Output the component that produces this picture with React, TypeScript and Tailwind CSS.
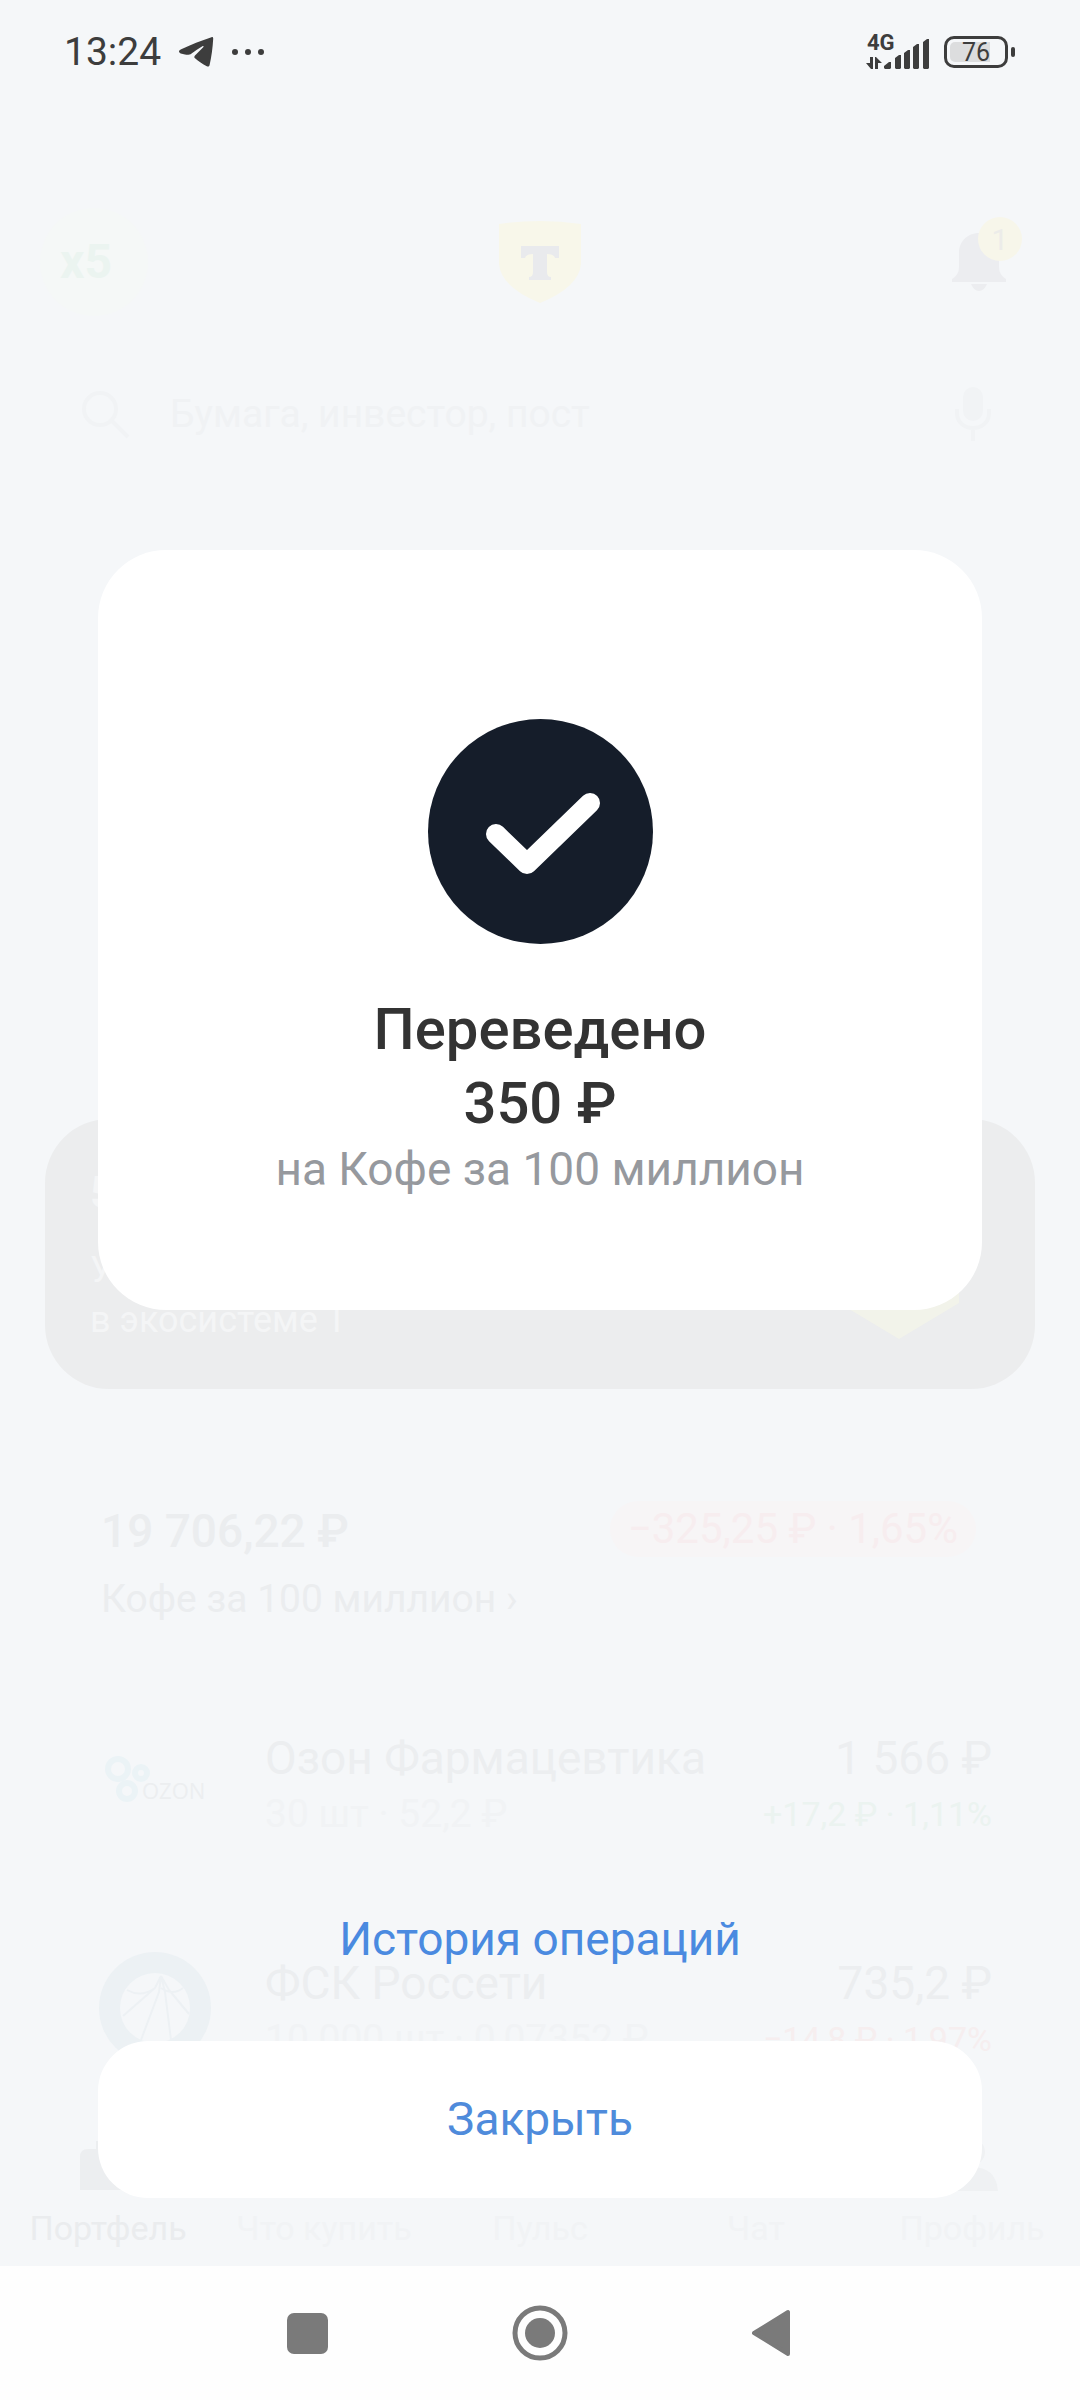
import type { ReactNode } from "react";

type Holding = {
	name: string;
	lot: string;
	value: string;
	change: string;
	up: boolean;
	logo: ReactNode;
};

const holdings: Holding[] = [
	{
		name: "Озон Фармацевтика",
		lot: "30 шт · 52,2 ₽",
		value: "1 566 ₽",
		change: "+17,2 ₽ · 1,11%",
		up: true,
		logo: <OzonLogo />
	},
	{
		name: "ФСК Россети",
		lot: "10 000 шт · 0,07352 ₽",
		value: "735,2 ₽",
		change: "−14,8 ₽ · 1,97%",
		up: false,
		logo: <RossetiLogo />
	}
];

function OzonLogo() {
	return (
		<svg viewBox="0 0 112 112" className="size-28 shrink-0" aria-label="Ozon">
			<g fill="none" stroke="#ebf3f6" strokeWidth="6">
				<circle cx="19" cy="42" r="10" />
				<circle cx="42" cy="46" r="6" />
				<circle cx="28" cy="64" r="8" />
			</g>
			<text
				x="43"
				y="72"
				fontSize="22"
				fontFamily="Open Sans, sans-serif"
				fill="#eceef0"
			>
				OZON
			</text>
		</svg>
	);
}

function RossetiLogo() {
	return (
		<svg viewBox="0 0 112 112" className="size-28 shrink-0" aria-label="Россети">
			<circle cx="56" cy="56" r="56" fill="#ecf1f4" />
			<circle cx="56" cy="56" r="35" fill="#f5f7f9" />
			<path
				d="M62 24 56 36 24 64M62 24 60 40 42 88M62 24 66 40 72 88M62 24 70 38 90 62M28 38q14 8 28-2M62 36q12 8 22 0"
				fill="none"
				stroke="#edf1f4"
				strokeWidth="2"
			/>
		</svg>
	);
}

function TelegramIcon() {
	return (
		<svg viewBox="0 0 35 32" width="35" height="32" fill="#3d3d3d">
			<path d="M0 15.6C0 14.4 1 13.8 2.200 13.200 12 8.600 22 4.600 32.500 1.200c1.200-.3 1.800.3 1.700 1.500-.5 9-1.700 18-3.600 26.300-.4 1.400-1.400 2-2.800 1.300C23.400 28.100 19.600 25.400 16 22.300c-.9-.9-.9-1.900 0-2.900L24.200 11.200c.7-.9.3-1.500-.8-1-3.800 2.200-7.400 4.800-10.800 7.200-2 1.500-4.300 1.700-6.600 1.100L1.700 17.400C.7 17 0 16.500 0 15.600z" />
		</svg>
	);
}

function StatusBar() {
	return (
		<div className="flex h-[104px] items-center justify-between pl-16 pr-[65px] text-[#3d3d3d]">
			<div className="flex items-center">
				<span className="w-[115px] text-[39px] leading-none">13:24</span>
				<TelegramIcon />
				<div className="ml-[18px] flex gap-[7px]">
					<span className="size-1.5 rounded-full bg-[#3d3d3d]" />
					<span className="size-1.5 rounded-full bg-[#3d3d3d]" />
					<span className="size-1.5 rounded-full bg-[#3d3d3d]" />
				</div>
			</div>
			<div className="flex items-center">
				<svg viewBox="0 -6 66 48" width="66" height="48" fill="#3d3d3d">
					<text
						x="1"
						y="16"
						fontSize="22"
						fontWeight="700"
						fontFamily="Roboto, sans-serif"
					>
						4G
					</text>
					<path d="M4 23h3v12H5L0 29h4zM9 35V23h1l6 6h-4v6z" />
					<path d="M18 34v-2l5-4h2v6l-1 1h-5zM29 34V24l4-3h2v13l-1 1h-4zM38 34V19l4-3h2v18l-1 1h-4zM47 34V13l4-3h2v24l-1 1h-4zM57 34V8l4-3h2v29l-1 1h-4z" />
				</svg>
				<div className="ml-3 flex h-8 w-16 rounded-[10px] border-[3px] border-[#3d3d3d] p-[3px]">
					<div className="flex w-10 items-center justify-end rounded-l-[5px] bg-[#dcddde]">
						<span className="text-[25px] leading-none">76</span>
					</div>
				</div>
				<div className="ml-[3px] h-2.5 w-1 rounded-full bg-[#3d3d3d]" />
			</div>
		</div>
	);
}

function AppHeader() {
	return (
		<header className="mt-[104px] grid h-[108px] grid-cols-3 items-center px-10">
			<div className="flex size-[108px] items-center rounded-full bg-[#f5f8f7] pl-5 text-[48px] font-bold text-[#ebf4f0]">
				x5
			</div>
			<svg
				viewBox="0 0 82 82"
				className="size-[82px] justify-self-center"
				aria-label="Т-Инвестиции"
			>
				<path
					d="M0 3Q41-3 82 3v40Q80 66 41 82 2 66 0 43z"
					fill="#f8f7ea"
				/>
				<path
					d="M22 25h38v12h-4q-1-4-8-4v18q0 5 4 5v3H30v-3q4 0 4-5V33q-7 0-8 4h-4z"
					fill="#e9eaed"
				/>
			</svg>
			<button
				type="button"
				className="relative mr-[30px] justify-self-end"
				aria-label="Уведомления, 1"
			>
				<svg viewBox="0 0 54 58" width="54" height="58" className="mr-1" fill="#ecedf0">
					<path d="M27 0c12 0 20 9 20 20v14q0 8 7 12v3H0v-3q7-4 7-12V20C7 9 15 0 27 0zM19 51h16q-3 7-8 7t-8-7z" />
				</svg>
				<span className="absolute -right-3 -top-4 flex size-11 items-center justify-center rounded-full bg-[#f7f6ea] text-[30px] text-[#ecece9]">
					1
				</span>
			</button>
		</header>
	);
}

function SearchRow() {
	return (
		<div className="mt-[58px] flex h-20 items-center pl-20 pr-[88px]">
			<svg viewBox="0 0 50 50" width="50" height="50" fill="none" stroke="#f1f3f5" strokeWidth="4">
				<circle cx="20" cy="20" r="16" />
				<path d="m32 32 16 16" />
			</svg>
			<input
				type="search"
				aria-label="Поиск"
				placeholder="Бумага, инвестор, пост"
				className="ml-10 min-w-0 flex-1 bg-transparent text-[39px] placeholder:text-[#f0f2f4]"
			/>
			<button type="button" aria-label="Голосовой поиск">
				<svg viewBox="0 0 38 54" width="38" height="54" fill="none" stroke="#f1f3f5" strokeWidth="4">
					<rect x="11" y="2" width="16" height="30" rx="8" fill="#f1f3f5" />
					<path d="M3 22v4c0 20 32 20 32 0v-4M19 42v12" />
				</svg>
			</button>
		</div>
	);
}

function Banner() {
	return (
		<section className="mx-[45px] mt-[665px] flex h-[270px] justify-between rounded-[64px] bg-[#ecedee] pl-[45px] pr-[76px] text-[#f4f5f6]">
			<div className="pt-[46px]">
				<p className="text-[44px] font-bold leading-[56px]">5</p>
				<p className="pt-6 text-[36px] leading-[50px]">
					У
					<br />
					в экосистеме Т
				</p>
			</div>
			<svg viewBox="0 0 120 120" width="120" height="120" className="mt-[100px]">
				<path d="M0 0h120v84L60 120 0 84z" fill="#f2f3ea" />
			</svg>
		</section>
	);
}

function Balance() {
	return (
		<section className="mt-[104px] flex items-start justify-between pl-[101px] pr-[104px]">
			<div>
				<p className="text-[46px] font-medium leading-[76px] text-[#ebedef]">
					19 706,22 ₽
				</p>
				<p className="text-[39px] leading-[60px] text-[#ebedef]">
					Кофе за 100 миллион ›
				</p>
			</div>
			<span className="mt-2 rounded-full bg-[#f7f5f6] px-[18px] text-[42px] leading-[56px] text-[#f7edef]">
				−325,25 ₽ · 1,65%
			</span>
		</section>
	);
}

function HoldingRow({ item }: { item: Holding }) {
	return (
		<li className="flex h-[225px] items-start pl-[99px] pr-[88px]">
			{item.logo}
			<div className="ml-[54px] flex-1">
				<p className="text-[46px] leading-[62px] text-[#eceef0]">{item.name}</p>
				<p className="text-[39px] leading-[50px] text-[#f1f3f5]">{item.lot}</p>
			</div>
			<div className="text-right">
				<p className="text-[46px] leading-[62px] text-[#eceef0]">{item.value}</p>
				<p
					className={`text-[34px] leading-[50px] ${
						item.up ? "text-[#ebf3f0]" : "text-[#f6eeef]"
					}`}
				>
					{item.change}
				</p>
			</div>
		</li>
	);
}

function TabBar() {
	return (
		<nav className="grid grid-cols-5 pb-3 text-center text-[34px] leading-[46px] text-[#f1f3f5]">
			<a href="#portfolio" className="text-[#eaecee]">
				<svg viewBox="0 0 56 56" width="56" height="56" className="mx-auto mb-3" fill="#eceef0">
					<path d="M16 12V4h24v8h8q8 0 8 8v6H0v-6q0-8 8-8zM0 26h56v27H0z" />
				</svg>
				Портфель
			</a>
			<a href="#buy" className="pt-[68px]">
				Что купить
			</a>
			<a href="#pulse" className="pt-[68px]">
				Пульс
			</a>
			<a href="#chat" className="pt-[68px]">
				Чат
			</a>
			<a href="#profile">
				<svg viewBox="0 0 56 56" width="56" height="56" className="mx-auto mb-3" fill="#eff1f3">
					<circle cx="28" cy="15" r="13" />
					<path d="M2 54q2-24 26-24t26 24z" />
				</svg>
				Профиль
			</a>
		</nav>
	);
}

function TransferDialog() {
	return (
		<div
			role="dialog"
			aria-modal="true"
			aria-labelledby="transfer-title"
			className="absolute inset-0 flex flex-col px-[98px] pb-[68px] pt-[550px]"
		>
			<div className="flex flex-col items-center rounded-[68px] bg-white pb-[112px] pt-[169px] text-center">
				<svg viewBox="0 0 225 225" width="225" height="225">
					<circle cx="112.5" cy="112.500" r="112.500" fill="#151d2a" />
					<path
						d="M68 115 99 145 162 84"
						fill="none"
						stroke="#fff"
						strokeWidth="20"
						strokeLinecap="round"
						strokeLinejoin="round"
					/>
				</svg>
				<h1
					id="transfer-title"
					className="mt-12 text-[58px] font-medium leading-[74px] text-[#333333]"
				>
					Переведено
					<br />
					350 ₽
				</h1>
				<p className="text-[46px] leading-[58px] text-[#96999e]">
					на Кофе за 100 миллион
				</p>
			</div>
			<button
				type="button"
				className="mt-auto self-center text-[46px] leading-[64px] text-[#4a8ae0]"
			>
				История операций
			</button>
			<button
				type="button"
				className="mt-[70px] h-[157px] rounded-[50px] bg-white text-[46px] text-[#4f8bdb]"
			>
				Закрыть
			</button>
		</div>
	);
}

function SystemNav() {
	return (
		<div className="flex h-[134px] items-center justify-center gap-[184px] bg-[#fefefe]">
			<button type="button" aria-label="Недавние">
				<svg viewBox="0 0 41 41" width="41" height="41">
					<rect width="41" height="41" rx="7" fill="#7a7a7a" />
				</svg>
			</button>
			<button type="button" aria-label="Домой">
				<svg viewBox="0 0 56 56" width="56" height="56">
					<circle cx="28" cy="28" r="25" fill="none" stroke="#7a7a7a" strokeWidth="5" />
					<circle cx="28" cy="28" r="15" fill="#7a7a7a" />
				</svg>
			</button>
			<button type="button" aria-label="Назад">
				<svg viewBox="0 0 41 48" width="41" height="48">
					<path
						d="M2 24 36 3v42z"
						fill="#7a7a7a"
						stroke="#7a7a7a"
						strokeWidth="4"
						strokeLinejoin="round"
					/>
				</svg>
			</button>
		</div>
	);
}

export default function App() {
	return (
		<div className="flex min-h-screen flex-col bg-[#f5f7f9] font-[Roboto,sans-serif]">
			<main className="relative flex flex-1 flex-col">
				<StatusBar />
				<AppHeader />
				<SearchRow />
				<Banner />
				<Balance />
				<ul className="mt-[98px]">
					{holdings.map((item) => (
						<HoldingRow key={item.name} item={item} />
					))}
				</ul>
				<div className="-mt-10">
					<TabBar />
				</div>
				<TransferDialog />
			</main>
			<SystemNav />
		</div>
	);
}
